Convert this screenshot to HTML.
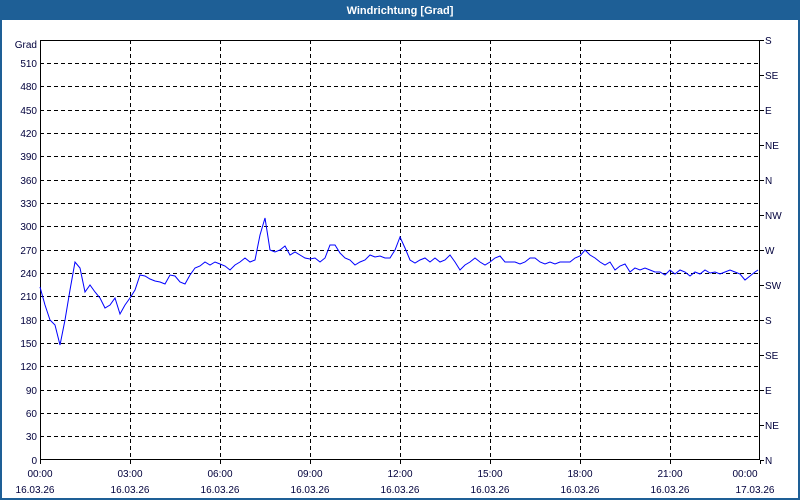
<!DOCTYPE html>
<html><head><meta charset="utf-8"><style>
html,body{margin:0;padding:0;background:#fff;}
body{width:800px;height:500px;overflow:hidden;position:relative;font-family:"Liberation Sans",sans-serif;}
</style></head><body>
<svg width="800" height="500" viewBox="0 0 800 500" xmlns="http://www.w3.org/2000/svg" style="position:absolute;left:0;top:0">
<rect x="0" y="0" width="800" height="500" fill="#1e5f96"/>
<rect x="2" y="20" width="796" height="478" fill="#fff"/>
<text x="400" y="14" fill="#fff" font-size="11" font-weight="bold" text-anchor="middle" font-family="Liberation Sans">Windrichtung [Grad]</text>
<g stroke="#000" stroke-width="1" stroke-dasharray="4,3" shape-rendering="crispEdges">
<line x1="40" y1="63.5" x2="760" y2="63.5"/><line x1="40" y1="86.5" x2="760" y2="86.5"/><line x1="40" y1="110.5" x2="760" y2="110.5"/><line x1="40" y1="133.5" x2="760" y2="133.5"/><line x1="40" y1="156.5" x2="760" y2="156.5"/><line x1="40" y1="180.5" x2="760" y2="180.5"/><line x1="40" y1="203.5" x2="760" y2="203.5"/><line x1="40" y1="226.5" x2="760" y2="226.5"/><line x1="40" y1="250.5" x2="760" y2="250.5"/><line x1="40" y1="273.5" x2="760" y2="273.5"/><line x1="40" y1="296.5" x2="760" y2="296.5"/><line x1="40" y1="320.5" x2="760" y2="320.5"/><line x1="40" y1="343.5" x2="760" y2="343.5"/><line x1="40" y1="366.5" x2="760" y2="366.5"/><line x1="40" y1="390.5" x2="760" y2="390.5"/><line x1="40" y1="413.5" x2="760" y2="413.5"/><line x1="40" y1="436.5" x2="760" y2="436.5"/>
<line x1="130.5" y1="40" x2="130.5" y2="460"/><line x1="220.5" y1="40" x2="220.5" y2="460"/><line x1="310.5" y1="40" x2="310.5" y2="460"/><line x1="400.5" y1="40" x2="400.5" y2="460"/><line x1="490.5" y1="40" x2="490.5" y2="460"/><line x1="580.5" y1="40" x2="580.5" y2="460"/><line x1="670.5" y1="40" x2="670.5" y2="460"/>
</g>
<rect x="40.5" y="40.5" width="719" height="419" fill="none" stroke="#000" shape-rendering="crispEdges"/>
<g stroke="#000" shape-rendering="crispEdges">
<line x1="760" y1="40.5" x2="764" y2="40.5"/><line x1="760" y1="75.5" x2="764" y2="75.5"/><line x1="760" y1="110.5" x2="764" y2="110.5"/><line x1="760" y1="145.5" x2="764" y2="145.5"/><line x1="760" y1="180.5" x2="764" y2="180.5"/><line x1="760" y1="215.5" x2="764" y2="215.5"/><line x1="760" y1="250.5" x2="764" y2="250.5"/><line x1="760" y1="285.5" x2="764" y2="285.5"/><line x1="760" y1="320.5" x2="764" y2="320.5"/><line x1="760" y1="355.5" x2="764" y2="355.5"/><line x1="760" y1="390.5" x2="764" y2="390.5"/><line x1="760" y1="425.5" x2="764" y2="425.5"/><line x1="760" y1="460.5" x2="764" y2="460.5"/>
<line x1="40.5" y1="460" x2="40.5" y2="464"/><line x1="130.5" y1="460" x2="130.5" y2="464"/><line x1="220.5" y1="460" x2="220.5" y2="464"/><line x1="310.5" y1="460" x2="310.5" y2="464"/><line x1="400.5" y1="460" x2="400.5" y2="464"/><line x1="490.5" y1="460" x2="490.5" y2="464"/><line x1="580.5" y1="460" x2="580.5" y2="464"/><line x1="670.5" y1="460" x2="670.5" y2="464"/><line x1="760.5" y1="460" x2="760.5" y2="464"/>
</g>
<g font-size="10" fill="#00003c" text-anchor="end" font-family="Liberation Sans">
<text x="37" y="48">Grad</text>
<text x="37" y="67">510</text><text x="37" y="90">480</text><text x="37" y="114">450</text><text x="37" y="137">420</text><text x="37" y="160">390</text><text x="37" y="184">360</text><text x="37" y="207">330</text><text x="37" y="230">300</text><text x="37" y="254">270</text><text x="37" y="277">240</text><text x="37" y="300">210</text><text x="37" y="324">180</text><text x="37" y="347">150</text><text x="37" y="370">120</text><text x="37" y="394">90</text><text x="37" y="417">60</text><text x="37" y="440">30</text><text x="37" y="464">0</text>
</g>
<g font-size="10" fill="#00003c" font-family="Liberation Sans">
<text x="765" y="44">S</text><text x="765" y="79">SE</text><text x="765" y="114">E</text><text x="765" y="149">NE</text><text x="765" y="184">N</text><text x="765" y="219">NW</text><text x="765" y="254">W</text><text x="765" y="289">SW</text><text x="765" y="324">S</text><text x="765" y="359">SE</text><text x="765" y="394">E</text><text x="765" y="429">NE</text><text x="765" y="464">N</text>
</g>
<g font-size="10" fill="#00003c" text-anchor="middle" font-family="Liberation Sans">
<text x="40" y="477">00:00</text><text x="130" y="477">03:00</text><text x="220" y="477">06:00</text><text x="310" y="477">09:00</text><text x="400" y="477">12:00</text><text x="490" y="477">15:00</text><text x="580" y="477">18:00</text><text x="670" y="477">21:00</text><text x="745" y="477">00:00</text>
<text x="35" y="493">16.03.26</text><text x="130" y="493">16.03.26</text><text x="220" y="493">16.03.26</text><text x="310" y="493">16.03.26</text><text x="400" y="493">16.03.26</text><text x="490" y="493">16.03.26</text><text x="580" y="493">16.03.26</text><text x="670" y="493">16.03.26</text><text x="755" y="493">17.03.26</text>
</g>
<polyline fill="none" stroke="#0000ff" stroke-width="1" points="40,287 45,305 50,320 55,325 60,345 65,320 70,290 75,262 80,268 85,292 90,285 95,292 100,298 105,308 110,305 115,298 120,314 125,305 130,298 135,290 140,275 145,276 150,279 155,281 160,282 165,284 170,275 175,276 180,282 185,284 190,275 195,268 200,266 205,262 210,265 215,262 220,264 225,266 230,270 235,265 240,262 245,258 250,262 255,260 260,235 265,218 270,250 275,252 280,250 285,246 290,255 295,252 300,255 305,258 310,259 315,258 320,262 325,258 330,245 335,245 340,253 345,258 350,260 355,265 360,262 365,260 370,255 375,257 380,256 385,258 390,258 395,250 400,237 405,248 410,260 415,263 420,260 425,258 430,262 435,258 440,262 445,260 450,255 455,262 460,270 465,265 470,262 475,258 480,262 485,265 490,262 495,258 500,256 505,262 510,262 515,262 520,264 525,262 530,258 535,258 540,262 545,264 550,262 555,264 560,262 565,262 570,262 575,258 580,256 585,250 590,255 595,258 600,262 605,265 610,262 615,270 620,266 625,264 630,272 635,268 640,270 645,268 650,270 655,272 660,272 665,275 670,270 675,274 680,270 685,272 690,276 695,272 700,274 705,270 710,273 715,272 720,274 725,272 730,270 735,272 740,274 745,280 750,276 755,272 758,270"/>
</svg>
</body></html>
